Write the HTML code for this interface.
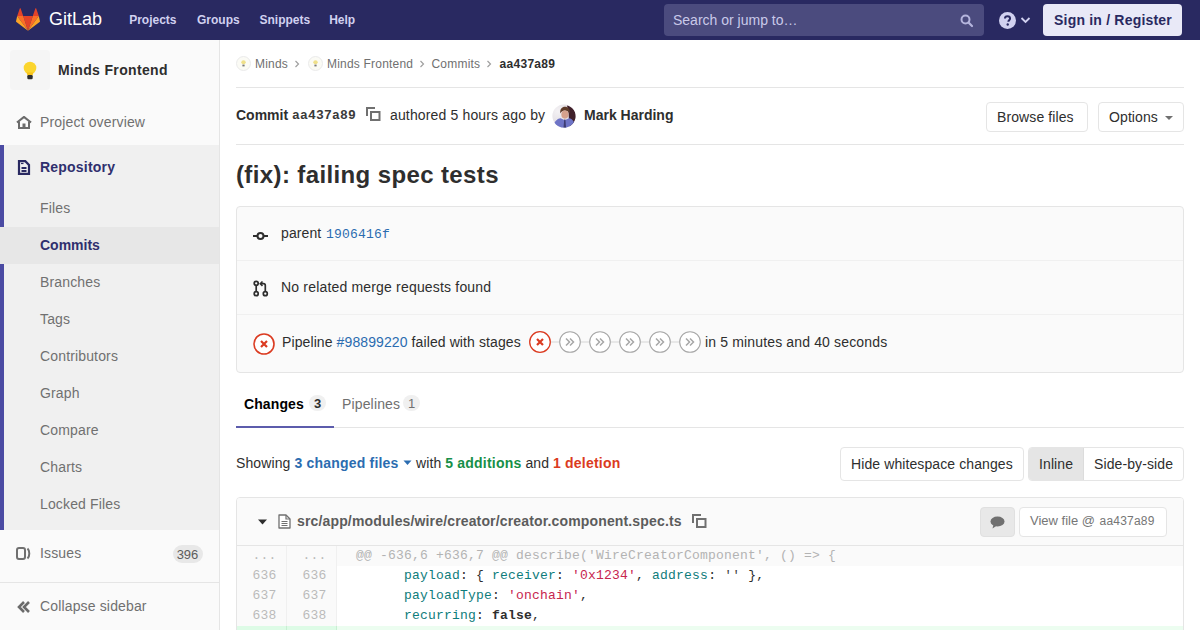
<!DOCTYPE html>
<html><head><meta charset="utf-8">
<style>
*{box-sizing:border-box;margin:0;padding:0}
html,body{width:1200px;height:630px;overflow:hidden;background:#fff;font-family:"Liberation Sans",sans-serif;font-size:14px;color:#2e2e2e}
.a{position:absolute;white-space:nowrap}
.t14{font-size:14px;line-height:16px;letter-spacing:0.15px}
.b14{font-size:14px;line-height:16px;font-weight:bold;letter-spacing:0.2px}
.mono{font-family:"Liberation Mono",monospace}
#hdr{position:absolute;left:0;top:0;width:1200px;height:40px;background:#292961}
.nav{font-weight:bold;font-size:12px;line-height:14px;color:#d1d1f0;top:13px}
#side{position:absolute;left:0;top:40px;width:220px;height:590px;background:#fafafa;border-right:1px solid #e5e5e5}
.si{left:40px;color:#707070}
.btn{position:absolute;border:1px solid #e5e5e5;border-radius:4px;background:#fff}
.stage{position:absolute;top:331px;width:22px;height:22px;border-radius:50%;border:1px solid #a7a7a7;background:#fff}
.ln{position:absolute;width:51px;height:20px;background:#fafafa;border-right:1px solid #f0f0f0;color:#bababa;text-align:right;padding-right:9.5px;font-family:"Liberation Mono",monospace;font-size:13px;line-height:20px;letter-spacing:0.2px}
.code{position:absolute;left:337px;width:846px;height:20px;font-family:"Liberation Mono",monospace;font-size:13px;line-height:20px;letter-spacing:0.2px;padding-left:19px;white-space:pre;color:#2e2e2e}
.k{color:#0e7c7b}.s{color:#c7254e}.kc{font-weight:bold;color:#2e2e2e}
</style></head><body>
<div id="hdr">
  <svg class="a" style="left:16px;top:8px" width="24" height="24" viewBox="0 0 36 36">
    <path fill="#e24329" d="M18 34.2l7.2-22.2H10.8z"/>
    <path fill="#fc6d26" d="M18 34.2L10.8 12H1.8z"/>
    <path fill="#fca326" d="M1.8 12L.1 19.6c-.2.6 0 1.2.5 1.5L18 34.2z"/>
    <path fill="#e24329" d="M1.8 12h9L7 0.8c-.2-.6-1.1-.6-1.3 0z"/>
    <path fill="#fc6d26" d="M18 34.2l7.2-22.2h9z"/>
    <path fill="#fca326" d="M34.2 12l1.7 7.6c.2.6 0 1.2-.5 1.5L18 34.2z"/>
    <path fill="#e24329" d="M34.2 12h-9l3.8-11.2c.2-.6 1.1-.6 1.3 0z"/>
  </svg>
  <div class="a" style="left:49px;top:10px;color:#fff;font-size:18px;line-height:18px">GitLab</div>
  <div class="a nav" style="left:129.2px">Projects</div>
  <div class="a nav" style="left:197px">Groups</div>
  <div class="a nav" style="left:259.5px">Snippets</div>
  <div class="a nav" style="left:329.2px">Help</div>
  <div class="a" style="left:664px;top:4px;width:320px;height:32px;border-radius:4px;background:#4b4b7e"></div>
  <div class="a t14" style="left:673px;top:12px;color:#c9c9e9;letter-spacing:0">Search or jump to…</div>
  <svg class="a" style="left:960px;top:14px" width="14" height="14" viewBox="0 0 14 14"><circle cx="5.5" cy="5.5" r="4" fill="none" stroke="#b5b5dd" stroke-width="2"/><path d="M8.5 8.5l3.5 3.5" stroke="#b5b5dd" stroke-width="2.2" stroke-linecap="round"/></svg>
  <svg class="a" style="left:999px;top:12px" width="17" height="17" viewBox="0 0 16 16"><circle cx="8" cy="8" r="8" fill="#d1d1f0"/><path d="M5.6 6.2c0-1.4 1-2.3 2.4-2.3s2.4.9 2.4 2.2c0 1.5-1.6 1.7-1.6 3" fill="none" stroke="#292961" stroke-width="1.9"/><circle cx="8.2" cy="11.8" r="1.1" fill="#292961"/></svg>
  <svg class="a" style="left:1020px;top:16px" width="11" height="8" viewBox="0 0 11 8"><path d="M1.5 2l4 4 4-4" fill="none" stroke="#d1d1f0" stroke-width="1.8"/></svg>
  <div class="a" style="left:1043px;top:4px;width:139px;height:32px;border-radius:4px;background:#e9e9f7"></div>
  <div class="a b14" style="left:1054px;top:12px;color:#292961">Sign in / Register</div>
</div>

<div id="side">
  <div class="a" style="left:0;top:105px;width:219px;height:385px;background:#f0f0f0"></div>
  <div class="a" style="left:0;top:105px;width:4px;height:385px;background:#4b4ba3"></div>
  <div class="a" style="left:0;top:187px;width:219px;height:37px;background:#e7e7e7"></div>
  <div class="a" style="left:10px;top:10px;width:40px;height:40px;border-radius:4px;background:#f5f5f5"></div>
  <svg class="a" style="left:22px;top:21px" width="16" height="19" viewBox="0 0 16 19"><ellipse cx="8" cy="7" rx="6.3" ry="6.2" fill="#fbd52e"/><path d="M4.5 11.5h7l-1 3h-5z" fill="#f6c21a"/><rect x="5.3" y="14" width="5.4" height="4.2" rx="1.2" fill="#2e2e2e"/></svg>
  <div class="a b14" style="left:58px;top:22px;color:#2e2e2e;letter-spacing:0.35px">Minds Frontend</div>

  <svg class="a" style="left:16px;top:76px" width="16" height="13" viewBox="0 0 16 13"><path d="M1 6.5L8 1l7 5.5" fill="none" stroke="#6b6b6b" stroke-width="2.2" stroke-linejoin="miter"/><path d="M3 5.5V12h10V5.5" fill="none" stroke="#6b6b6b" stroke-width="2"/><rect x="6.5" y="7.5" width="3" height="4.5" fill="#6b6b6b"/></svg>
  <div class="a si t14" style="top:74px">Project overview</div>

  <svg class="a" style="left:17px;top:120px" width="14" height="15" viewBox="0 0 14 15"><path d="M2 1.2h6.3l3.7 3.7v9H2z" fill="none" stroke="#292961" stroke-width="2.2" stroke-linejoin="miter"/><path d="M4.5 8h5M4.5 11h5" stroke="#292961" stroke-width="1.8"/><path d="M4 3.5h2.5" stroke="#292961" stroke-width="1.2"/></svg>
  <div class="a si b14" style="top:118.8px;color:#2f2f6e">Repository</div>
  <div class="a si t14" style="top:160px">Files</div>
  <div class="a si b14" style="top:197px;color:#2f2f6e;letter-spacing:0">Commits</div>
  <div class="a si t14" style="top:234px">Branches</div>
  <div class="a si t14" style="top:271px">Tags</div>
  <div class="a si t14" style="top:308px">Contributors</div>
  <div class="a si t14" style="top:345px">Graph</div>
  <div class="a si t14" style="top:382px">Compare</div>
  <div class="a si t14" style="top:419px">Charts</div>
  <div class="a si t14" style="top:456px">Locked Files</div>

  <svg class="a" style="left:16px;top:507px" width="15" height="13" viewBox="0 0 15 13"><rect x="1" y="1" width="8" height="11" rx="2" fill="none" stroke="#707070" stroke-width="2"/><path d="M11.5 1.5c1.5 1.3 1.8 3 1.8 5s-.3 3.7-1.8 5" fill="none" stroke="#707070" stroke-width="2"/></svg>
  <div class="a si t14" style="top:505px">Issues</div>
  <div class="a" style="left:172.5px;top:504.5px;width:30px;height:18.5px;border-radius:9px;background:#e8e8e8;color:#5c5c5c;font-size:13px;line-height:19px;text-align:center">396</div>
  <div class="a" style="left:0;top:542px;width:219px;height:1px;background:#e5e5e5"></div>
  <svg class="a" style="left:17px;top:560px" width="14" height="14" viewBox="0 0 14 14"><path d="M7 2L2 7l5 5M12 2L7 7l5 5" fill="none" stroke="#6b6b6b" stroke-width="2.6"/></svg>
  <div class="a si t14" style="top:558px">Collapse sidebar</div>
</div>

<!-- main -->
<!-- breadcrumbs -->
<svg class="a" style="left:236px;top:56px" width="15" height="15" viewBox="0 0 15 15"><circle cx="7.5" cy="7.5" r="7" fill="#fbfbf5" stroke="#eaeaea"/><ellipse cx="7.5" cy="6.3" rx="2.2" ry="2" fill="#efe08a"/><rect x="6.4" y="8.6" width="2.2" height="1.8" fill="#7a7a7a"/></svg>
<div class="a" style="left:255px;top:57px;font-size:12px;line-height:14px;color:#707070;letter-spacing:0.2px">Minds</div>
<svg class="a" style="left:294px;top:60px" width="6" height="8" viewBox="0 0 6 8"><path d="M1.5 1l3 3-3 3" fill="none" stroke="#a0a0a0" stroke-width="1.2"/></svg>
<svg class="a" style="left:308px;top:56px" width="15" height="15" viewBox="0 0 15 15"><circle cx="7.5" cy="7.5" r="7" fill="#fbfbf5" stroke="#eaeaea"/><ellipse cx="7.5" cy="6.3" rx="2.2" ry="2" fill="#efe08a"/><rect x="6.4" y="8.6" width="2.2" height="1.8" fill="#7a7a7a"/></svg>
<div class="a" style="left:327px;top:57px;font-size:12px;line-height:14px;color:#707070;letter-spacing:0.2px">Minds Frontend</div>
<svg class="a" style="left:419px;top:60px" width="6" height="8" viewBox="0 0 6 8"><path d="M1.5 1l3 3-3 3" fill="none" stroke="#a0a0a0" stroke-width="1.2"/></svg>
<div class="a" style="left:431.5px;top:57px;font-size:12px;line-height:14px;color:#707070;letter-spacing:0.2px">Commits</div>
<svg class="a" style="left:486px;top:60px" width="6" height="8" viewBox="0 0 6 8"><path d="M1.5 1l3 3-3 3" fill="none" stroke="#a0a0a0" stroke-width="1.2"/></svg>
<div class="a" style="left:499.5px;top:57px;font-size:12px;line-height:14px;font-weight:bold;color:#2e2e2e;letter-spacing:0.3px">aa437a89</div>
<div class="a" style="left:236px;top:87px;width:948px;height:1px;background:#e5e5e5"></div>

<!-- commit header -->
<div class="a b14" style="left:236px;top:107px;letter-spacing:0">Commit</div>
<div class="a mono" style="left:292px;top:108px;font-size:13px;line-height:15px;font-weight:bold;letter-spacing:0.2px;color:#3a3a3a">aa437a89</div>
<svg class="a" style="left:366px;top:107px" width="15" height="14" viewBox="0 0 15 14"><path d="M1 9V1h8" fill="none" stroke="#707070" stroke-width="2"/><rect x="5" y="5" width="8.5" height="8" fill="none" stroke="#707070" stroke-width="2"/></svg>
<div class="a t14" style="left:390px;top:107px;color:#2e2e2e">authored 5 hours ago by</div>
<svg class="a" style="left:552px;top:104px" width="24" height="24" viewBox="0 0 24 24">
  <defs><clipPath id="cav"><circle cx="12" cy="12" r="11.6"/></clipPath><radialGradient id="gbg" cx="0.25" cy="0.3" r="0.8"><stop offset="0" stop-color="#f4f2f4"/><stop offset="1" stop-color="#d9d4dc"/></radialGradient></defs>
  <g clip-path="url(#cav)">
    <rect width="24" height="24" fill="url(#gbg)"/>
    <path d="M15 1.5C20 2.5 24 7 24 13V24H17.5L16.5 9z" fill="#40202a"/>
    <path d="M8.3 9.5C7.8 5 10 2.8 13 2.8S18.2 5 17.6 9.5C16.5 7.3 14.5 6.6 12.7 6.6S9.6 7.5 8.3 9.5z" fill="#5e3b28"/>
    <ellipse cx="12.9" cy="10.6" rx="3.6" ry="4.1" fill="#d6a18c"/>
    <path d="M1.5 24C1.5 17.5 5 14.8 8.6 14.2L12.8 16.2L17 14.2C20.5 14.8 23 17.5 23 24Z" fill="#6e74c6"/>
    <path d="M12.2 15.6h1.2l.7 8.4h-2.6z" fill="#3d3c72"/>
  </g>
</svg>
<div class="a b14" style="left:584px;top:107px;letter-spacing:0">Mark Harding</div>
<div class="btn" style="left:986px;top:102px;width:102px;height:30px"></div>
<div class="a t14" style="left:997px;top:109px;letter-spacing:0.1px">Browse files</div>
<div class="btn" style="left:1098px;top:102px;width:86px;height:30px"></div>
<div class="a t14" style="left:1109px;top:109px;letter-spacing:0.1px">Options</div>
<svg class="a" style="left:1164px;top:115px" width="10" height="6" viewBox="0 0 10 6"><path d="M1 1h8L5 5z" fill="#707070"/></svg>
<div class="a" style="left:236px;top:144px;width:948px;height:1px;background:#e5e5e5"></div>

<div class="a" style="left:236px;top:161px;font-size:24px;line-height:28px;font-weight:bold;letter-spacing:0.38px;color:#2e2e2e">(fix): failing spec tests</div>

<!-- info box -->
<div class="a" style="left:236px;top:206px;width:948px;height:167px;border:1px solid #e5e5e5;border-radius:4px;background:#fafafa"></div>
<div class="a" style="left:237px;top:260px;width:946px;height:1px;background:#f0f0f0"></div>
<div class="a" style="left:237px;top:314px;width:946px;height:1px;background:#f0f0f0"></div>
<svg class="a" style="left:252px;top:228px" width="17" height="16" viewBox="0 0 17 16"><path d="M1 8h4.5M11.5 8H16" stroke="#2e2e2e" stroke-width="2"/><circle cx="8.5" cy="8" r="3" fill="none" stroke="#2e2e2e" stroke-width="2"/></svg>
<div class="a t14" style="left:281px;top:225px;letter-spacing:0.1px">parent</div>
<div class="a mono" style="left:326px;top:226.7px;font-size:13px;line-height:15px;letter-spacing:0.2px;color:#2b6cb0">1906416f</div>

<svg class="a" style="left:253px;top:280px" width="16" height="17" viewBox="0 0 16 17"><circle cx="3.2" cy="3.3" r="2" fill="none" stroke="#2e2e2e" stroke-width="1.7"/><circle cx="3.2" cy="13.7" r="2" fill="none" stroke="#2e2e2e" stroke-width="1.7"/><circle cx="12.3" cy="13.7" r="2" fill="none" stroke="#2e2e2e" stroke-width="1.7"/><path d="M3.2 5.3v6.4M12.3 11.7V5.5c0-1.2-.6-1.8-1.8-1.8H8" fill="none" stroke="#2e2e2e" stroke-width="1.7"/><path d="M9.5 1.5L7.3 3.7l2.2 2.2" fill="none" stroke="#2e2e2e" stroke-width="1.6"/></svg>
<div class="a t14" style="left:281px;top:279px;letter-spacing:0.18px">No related merge requests found</div>

<svg class="a" style="left:253px;top:333px" width="22" height="22" viewBox="0 0 22 22"><circle cx="11" cy="11" r="10" fill="#fff" stroke="#db3b21" stroke-width="1.6"/><path d="M8 8l6 6M14 8l-6 6" stroke="#db3b21" stroke-width="2.2"/></svg>
<div class="a t14" style="left:282px;top:334px;letter-spacing:0.1px">Pipeline <span style="color:#2b6cb0">#98899220</span> failed with stages</div>
<div class="a" style="left:550px;top:341px;width:130px;height:2px;background:#e8e8e8"></div>
<svg class="a" style="left:529px;top:331px" width="22" height="22" viewBox="0 0 22 22"><circle cx="11" cy="11" r="10.3" fill="#fff" stroke="#db3b21" stroke-width="1.3"/><path d="M8 8l6 6M14 8l-6 6" stroke="#db3b21" stroke-width="2.2"/></svg>
<svg class="a" style="left:559px;top:331px" width="22" height="22" viewBox="0 0 22 22"><circle cx="11" cy="11" r="10.3" fill="#fff" stroke="#a7a7a7" stroke-width="1.1"/><path d="M7 7.5l3.5 3.5L7 14.5M11 7.5l3.5 3.5L11 14.5" fill="none" stroke="#a7a7a7" stroke-width="1.5"/></svg>
<svg class="a" style="left:589px;top:331px" width="22" height="22" viewBox="0 0 22 22"><circle cx="11" cy="11" r="10.3" fill="#fff" stroke="#a7a7a7" stroke-width="1.1"/><path d="M7 7.5l3.5 3.5L7 14.5M11 7.5l3.5 3.5L11 14.5" fill="none" stroke="#a7a7a7" stroke-width="1.5"/></svg>
<svg class="a" style="left:619px;top:331px" width="22" height="22" viewBox="0 0 22 22"><circle cx="11" cy="11" r="10.3" fill="#fff" stroke="#a7a7a7" stroke-width="1.1"/><path d="M7 7.5l3.5 3.5L7 14.5M11 7.5l3.5 3.5L11 14.5" fill="none" stroke="#a7a7a7" stroke-width="1.5"/></svg>
<svg class="a" style="left:649px;top:331px" width="22" height="22" viewBox="0 0 22 22"><circle cx="11" cy="11" r="10.3" fill="#fff" stroke="#a7a7a7" stroke-width="1.1"/><path d="M7 7.5l3.5 3.5L7 14.5M11 7.5l3.5 3.5L11 14.5" fill="none" stroke="#a7a7a7" stroke-width="1.5"/></svg>
<svg class="a" style="left:679px;top:331px" width="22" height="22" viewBox="0 0 22 22"><circle cx="11" cy="11" r="10.3" fill="#fff" stroke="#a7a7a7" stroke-width="1.1"/><path d="M7 7.5l3.5 3.5L7 14.5M11 7.5l3.5 3.5L11 14.5" fill="none" stroke="#a7a7a7" stroke-width="1.5"/></svg>
<div class="a t14" style="left:705px;top:334px;letter-spacing:0.15px">in 5 minutes and 40 seconds</div>

<!-- tabs -->
<div class="a" style="left:236px;top:427px;width:948px;height:1px;background:#e5e5e5"></div>
<div class="a" style="left:236px;top:426px;width:98px;height:2px;background:#5c5cac"></div>
<div class="a b14" style="left:244px;top:396px;color:#000;letter-spacing:0.1px">Changes</div>
<div class="a" style="left:309px;top:395px;width:17px;height:16px;border-radius:8px;background:#f0f0f0;font-size:13px;line-height:17px;text-align:center;color:#2e2e2e;font-weight:bold">3</div>
<div class="a t14" style="left:342px;top:396px;color:#707070">Pipelines</div>
<div class="a" style="left:403px;top:395px;width:17px;height:16px;border-radius:8px;background:#f0f0f0;font-size:13px;line-height:17px;text-align:center;color:#707070">1</div>

<!-- showing -->
<div class="a t14" style="left:236px;top:455px;letter-spacing:0.1px">Showing <b style="color:#2b6cb0;letter-spacing:0.2px">3 changed files</b></div>
<svg class="a" style="left:403px;top:460px" width="9" height="6" viewBox="0 0 9 6"><path d="M0.5 0.5h8L4.5 5z" fill="#2b6cb0"/></svg>
<div class="a t14" style="left:416px;top:455px;letter-spacing:0.1px">with <b style="color:#168f48;letter-spacing:0.2px">5 additions</b> and <b style="color:#db3b21;letter-spacing:0.2px">1 deletion</b></div>

<div class="btn" style="left:840px;top:447px;width:184px;height:34px"></div>
<div class="a t14" style="left:851px;top:456px;letter-spacing:0.1px">Hide whitespace changes</div>
<div class="btn" style="left:1028px;top:447px;width:156px;height:34px"></div>
<div class="a" style="left:1029px;top:448px;width:55px;height:32px;background:#e5e5e5;border-radius:3px 0 0 3px;border-right:1px solid #dcdcdc"></div>
<div class="a t14" style="left:1039px;top:456px;letter-spacing:0.1px">Inline</div>
<div class="a t14" style="left:1094px;top:456px;letter-spacing:0.1px">Side-by-side</div>

<!-- file -->
<div class="a" style="left:236px;top:497px;width:948px;height:140px;border:1px solid #e5e5e5;border-radius:4px 4px 0 0;background:#fff"></div>
<div class="a" style="left:237px;top:498px;width:946px;height:48px;background:#fafafa;border-bottom:1px solid #e5e5e5;border-radius:3px 3px 0 0"></div>
<svg class="a" style="left:258px;top:519px" width="9" height="6" viewBox="0 0 9 6"><path d="M0 0.5h9L4.5 5.5z" fill="#2e2e2e"/></svg>
<svg class="a" style="left:278px;top:514px" width="13" height="15" viewBox="0 0 13 15"><path d="M1 1h7l4 4v9H1z" fill="#fff" stroke="#707070" stroke-width="1.3" stroke-linejoin="round"/><path d="M8 1v4h4" fill="none" stroke="#707070" stroke-width="1.2"/><path d="M3.5 7.5h6M3.5 9.5h6M3.5 11.5h6" stroke="#707070" stroke-width="1"/></svg>
<div class="a b14" style="left:297px;top:513px;color:#5c5c5c;letter-spacing:0.15px">src/app/modules/wire/creator/creator.component.spec.ts</div>
<svg class="a" style="left:692px;top:514px" width="15" height="14" viewBox="0 0 15 14"><path d="M1 9V1h8" fill="none" stroke="#707070" stroke-width="2"/><rect x="5" y="5" width="8.5" height="8" fill="none" stroke="#707070" stroke-width="2"/></svg>
<div class="a" style="left:980px;top:507px;width:35px;height:30px;border-radius:4px;background:#e8e8e8;border:1px solid #e0e0e0"></div>
<svg class="a" style="left:990px;top:516px" width="15" height="13" viewBox="0 0 15 13"><ellipse cx="7.5" cy="5.5" rx="7" ry="5" fill="#707070"/><path d="M3.5 8.5L2.5 12.5 7 9.5z" fill="#707070"/></svg>
<div class="btn" style="left:1019px;top:507px;width:148px;height:30px"></div>
<div class="a" style="left:1030px;top:513px;font-size:13px;line-height:15px;color:#767676">View file @ <span style="font-size:12px;letter-spacing:0.2px;margin-left:1px">aa437a89</span></div>

<!-- diff -->
<div class="ln" style="left:237px;width:50px;top:546px">...</div><div class="ln" style="left:287px;width:50px;top:546px">...</div>
<div class="code" style="top:546px;background:#fafafa;color:#b3b3b3">@@ -636,6 +636,7 @@ describe('WireCreatorComponent', () =&gt; {</div>
<div class="ln" style="left:237px;width:50px;top:566px;background:#fafafa">636</div><div class="ln" style="left:287px;width:50px;top:566px">636</div>
<div class="code" style="top:566px">      <span class="k">payload</span>: { <span class="k">receiver</span>: <span class="s">'0x1234'</span>, <span class="k">address</span>: <span style="color:#444">''</span> },</div>
<div class="ln" style="left:237px;width:50px;top:586px">637</div><div class="ln" style="left:287px;width:50px;top:586px">637</div>
<div class="code" style="top:586px">      <span class="k">payloadType</span>: <span class="s">'onchain'</span>,</div>
<div class="ln" style="left:237px;width:50px;top:606px">638</div><div class="ln" style="left:287px;width:50px;top:606px">638</div>
<div class="code" style="top:606px">      <span class="k">recurring</span>: <span class="kc">false</span>,</div>
<div class="ln" style="left:237px;width:50px;top:626px;background:#ddfbe6;border-right-color:#c7f0d2"></div><div class="ln" style="left:287px;width:50px;top:626px;background:#ddfbe6;border-right-color:#c7f0d2"></div>
<div class="code" style="top:626px;background:#ecfdf0">      <span class="k">entitlGuid</span>: <span class="kc">{</span> <span class="s">'l'</span></div>
</body></html>
